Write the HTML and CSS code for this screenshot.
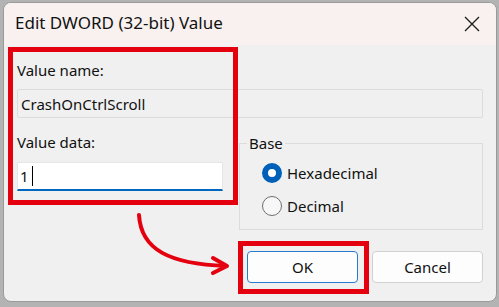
FILE: index.html
```html
<!DOCTYPE html>
<html lang="en">
<head>
    <meta charset="UTF-8">
    <meta name="viewport" content="width=device-width, initial-scale=1.0">
    <title>Edit DWORD (32-bit) Value</title>
    <link rel="stylesheet" href="styles.css">
</head>
<body>
    <div class="dialog">
        <div class="titlebar">
            <span class="title">Edit DWORD (32-bit) Value</span>
            <svg class="close" width="16" height="16" viewBox="0 0 16 16">
                <path d="M1 1 L15 15 M15 1 L1 15" stroke="#1b1b1b" stroke-width="1.3" fill="none"/>
            </svg>
        </div>
        <div class="content">
            <div class="label">Value name:</div>
            <div class="field name-field">CrashOnCtrlScroll</div>

            <div class="row">
                <div class="data-group">
                    <div class="label">Value data:</div>
                    <div class="field data-field">1<span class="caret"></span></div>
                </div>
                <fieldset class="base">
                    <legend>Base</legend>
                    <div class="options">
                        <div class="option"><span class="radio checked"></span>Hexadecimal</div>
                        <div class="option"><span class="radio"></span>Decimal</div>
                    </div>
                </fieldset>
            </div>

            <div class="buttons">
                <button class="btn default">OK</button>
                <button class="btn">Cancel</button>
            </div>
        </div>
    </div>

    <!-- annotations drawn over the dialog -->
    <div class="mark mark-fields"></div>
    <div class="mark mark-ok"></div>
    <svg class="arrow" width="499" height="307" viewBox="0 0 499 307">
        <path d="M139 215 C 141 250, 170 264, 226 266" stroke="#e4000f" stroke-width="4" fill="none" stroke-linecap="round"/>
        <path d="M213 258 L227 266 L213 273" stroke="#e4000f" stroke-width="4" fill="none" stroke-linecap="round" stroke-linejoin="round"/>
    </svg>
</body>
</html>
```

FILE: styles.css
```css
body {
    margin: 0;
    width: 499px;
    height: 307px;
    position: relative;
    overflow: hidden;
    background-color: #b3b3b3;
    font-family: "Noto Sans", "Liberation Sans", sans-serif;
    font-size: 15px;
    line-height: 20px;
    color: #111;
}
.dialog {
    margin: 2px 2px 0 3px;
    width: 494px;
    height: 300px;
    box-sizing: border-box;
    border: 1px solid #9a9a9a;
    border-radius: 8px;
    background-color: #f0f0f0;
    overflow: hidden;
}
.titlebar {
    height: 42px;
    display: flex;
    align-items: center;
    justify-content: space-between;
    padding: 0 16px 0 11px;
    background-color: #f9f1ef;
}
.title {
    font-size: 17px;
    margin-top: -2px;
}
.close {
    margin-top: -1px;
}
.content {
    padding: 15px 13px 0 13px;
}
.label {
    height: 20px;
}
.field {
    height: 29px;
    box-sizing: border-box;
    padding: 0 3px;
    display: flex;
    align-items: center;
}
.name-field {
    margin-top: 9px;
    border: 1px solid #dcdcdc;
    border-radius: 2px;
}
.row {
    margin-top: 14px;
    display: grid;
    grid-template-columns: 206px 1fr;
    column-gap: 16px;
    align-items: start;
}
.data-field {
    margin-top: 10px;
    padding-left: 2px;
    background-color: #fff;
    border: 1px solid #e6e6e6;
    border-bottom: 2px solid #0067c0;
}
.caret {
    display: inline-block;
    width: 1px;
    height: 20px;
    margin-left: 3px;
    background-color: #000;
}
.base {
    margin: 1px 0 0 0;
    padding: 0;
    height: 97px;
    box-sizing: border-box;
    border: 1px solid #dcdcdc;
}
.base legend {
    margin-left: 7px;
    padding: 0 2px;
}
.options {
    padding: 10px 0 0 22px;
    display: flex;
    flex-direction: column;
    gap: 13px;
}
.option {
    display: flex;
    align-items: center;
    gap: 5px;
    height: 20px;
}
.radio {
    width: 20px;
    height: 20px;
    box-sizing: border-box;
    border-radius: 50%;
    border: 1px solid #6e6e6e;
    background-color: #f7f7f7;
}
.radio.checked {
    border: 6px solid #005fb8;
    background-color: #fff;
}
.buttons {
    margin-top: 21px;
    display: flex;
    justify-content: flex-end;
    gap: 14px;
}
.btn {
    width: 111px;
    height: 32px;
    border: 1px solid #d0d0d0;
    border-radius: 4px;
    background-color: #fdfdfd;
    font-family: inherit;
    font-size: 15px;
    color: #111;
}
.btn.default {
    border-color: #2a7bd0;
}
.mark {
    position: absolute;
    box-sizing: border-box;
    border: 5px solid #e4000f;
}
.mark-fields {
    left: 8px;
    top: 47px;
    width: 230px;
    height: 158px;
}
.mark-ok {
    left: 238px;
    top: 241px;
    width: 131px;
    height: 53px;
}
.arrow {
    position: absolute;
    left: 0;
    top: 0;
    pointer-events: none;
}
```
